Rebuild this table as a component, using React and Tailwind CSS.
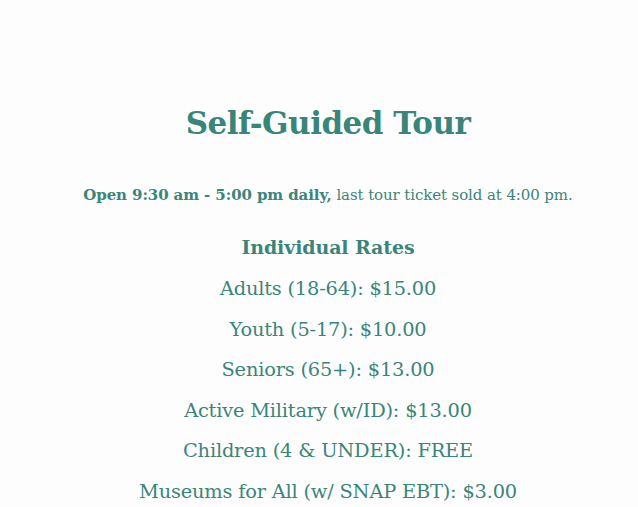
const rates = [
  "Adults (18-64): $15.00",
  "Youth (5-17): $10.00",
  "Seniors (65+): $13.00",
  "Active Military (w/ID): $13.00",
  "Children (4 & UNDER): FREE",
  "Museums for All (w/ SNAP EBT): $3.00",
];

export default function App() {
  return (
    <div className="min-h-screen bg-[#fdfdfd] text-[#3a857a] font-['DejaVu_Serif',serif]">
      <div className="flex flex-col items-center pt-[101px] pl-[18px]">
        <h1 className="text-[31px] font-bold leading-[44px] tracking-[-0.5px]">Self-Guided Tour</h1>
        <p className="mt-[38px] text-[15px] leading-[24px] tracking-[-0.1px]">
          <span className="font-bold">Open 9:30 am - 5:00 pm daily,</span> last tour ticket sold at 4:00 pm.
        </p>
        <h2 className="mt-[25px] text-[19px] font-bold leading-[30px] tracking-[-0.1px]">Individual Rates</h2>
        <ul className="mt-[7px] flex flex-col items-center">
          {rates.map((r) => (
            <li key={r} className="text-[19.4px] leading-[40.6px] tracking-[-0.2px]">{r}</li>
          ))}
        </ul>
      </div>
    </div>
  );
}
